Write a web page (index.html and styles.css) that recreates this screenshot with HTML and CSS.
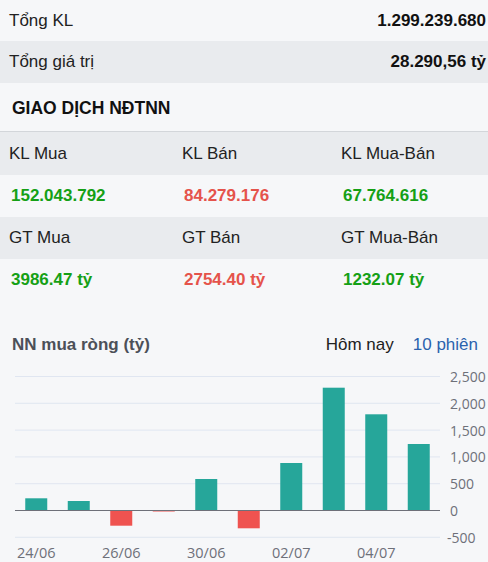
FILE: index.html
```html
<!DOCTYPE html>
<html lang="vi">
<head>
<meta charset="utf-8">
<title>Giao dịch NĐTNN</title>
<link rel="stylesheet" href="styles.css">
</head>
<body>
<div class="panel">
  <div class="sum-row">
    <span class="sum-label">Tổng KL</span>
    <span class="sum-value">1.299.239.680</span>
  </div>
  <div class="sum-row alt">
    <span class="sum-label">Tổng giá trị</span>
    <span class="sum-value">28.290,56 tỷ</span>
  </div>
  <div class="section-title">GIAO DỊCH NĐTNN</div>
  <div class="grid">
    <div class="cell head">KL Mua</div>
    <div class="cell head">KL Bán</div>
    <div class="cell head">KL Mua-Bán</div>
    <div class="cell val up">152.043.792</div>
    <div class="cell val down">84.279.176</div>
    <div class="cell val up">67.764.616</div>
    <div class="cell head">GT Mua</div>
    <div class="cell head">GT Bán</div>
    <div class="cell head">GT Mua-Bán</div>
    <div class="cell val up">3986.47 tỷ</div>
    <div class="cell val down">2754.40 tỷ</div>
    <div class="cell val up">1232.07 tỷ</div>
  </div>
  <div class="chart-head">
    <span class="chart-title">NN mua ròng (tỷ)</span>
    <div class="tabs">
      <span class="tab">Hôm nay</span>
      <span class="tab active">10 phiên</span>
    </div>
  </div>
  <svg class="chart" width="488" height="195" viewBox="0 0 488 195">
    <g class="grid-lines">
      <line x1="15" x2="440" y1="10.5" y2="10.5"/>
      <line x1="15" x2="440" y1="37.3" y2="37.3"/>
      <line x1="15" x2="440" y1="64.1" y2="64.1"/>
      <line x1="15" x2="440" y1="90.9" y2="90.9"/>
      <line x1="15" x2="440" y1="117.7" y2="117.7"/>
      <line x1="15" x2="440" y1="171.3" y2="171.3"/>
    </g>
    <g class="bars">
      <rect class="pos" x="25.25" y="132.3" width="22" height="12.2"/>
      <rect class="pos" x="67.75" y="135" width="22" height="9.5"/>
      <rect class="neg" x="110.25" y="144.5" width="22" height="15.2"/>
      <rect class="neg" x="152.75" y="144.5" width="22" height="1"/>
      <rect class="pos" x="195.25" y="113" width="22" height="31.5"/>
      <rect class="neg" x="237.75" y="144.5" width="22" height="17.8"/>
      <rect class="pos" x="280.25" y="97" width="22" height="47.5"/>
      <rect class="pos" x="322.75" y="21.7" width="22" height="122.8"/>
      <rect class="pos" x="365.25" y="48.3" width="22" height="96.2"/>
      <rect class="pos" x="407.75" y="78" width="22" height="66.5"/>
    </g>
    <line class="zero" x1="15" x2="440" y1="144.5" y2="144.5"/>
    <g class="y-labels">
      <text x="450" y="10.5">2,500</text>
      <text x="450" y="37.3">2,000</text>
      <text x="450" y="64.1">1,500</text>
      <text x="450" y="90.9">1,000</text>
      <text x="450" y="117.7">500</text>
      <text x="450" y="144.5">0</text>
      <text x="447" y="171.3">-500</text>
    </g>
    <g class="x-labels">
      <text x="36.25" y="192">24/06</text>
      <text x="121.25" y="192">26/06</text>
      <text x="206.25" y="192">30/06</text>
      <text x="291.25" y="192">02/07</text>
      <text x="376.25" y="192">04/07</text>
    </g>
  </svg>
</div>
</body>
</html>
```
FILE: styles.css
```css
html, body {
  margin: 0;
  padding: 0;
  background: #f6f7f9;
}
body {
  font-family: "Liberation Sans", Arial, sans-serif;
  font-size: 17px;
  color: #222;
  width: 488px;
  height: 562px;
  overflow: hidden;
}
.panel {
  display: flex;
  flex-direction: column;
}
.sum-row {
  height: 41px;
  display: flex;
  align-items: center;
  justify-content: space-between;
  padding: 0 2px 0 9px;
  background: #f6f7f9;
}
.sum-row.alt {
  height: 42px;
  background: #e9ebee;
}
.sum-value {
  font-weight: bold;
  color: #111;
}
.section-title {
  height: 49px;
  box-sizing: border-box;
  padding: 3px 0 0 12px;
  display: flex;
  align-items: center;
  font-weight: bold;
  font-size: 17.5px;
  color: #111;
  border-bottom: 1px solid #d3d6da;
}
.grid {
  display: grid;
  grid-template-columns: 173px 159px 1fr;
  grid-template-rows: 43px 42px 42px 42px;
}
.cell {
  display: flex;
  align-items: center;
  padding-left: 9px;
}
.cell.head {
  background: #e9ebee;
  color: #222;
}
.cell.val {
  background: #f6f7f9;
  font-weight: bold;
  padding-left: 11px;
}
.up { color: #15a015; }
.down { color: #e5534b; }
.chart-head {
  margin-top: 23px;
  height: 42px;
  display: flex;
  align-items: center;
  justify-content: space-between;
  padding: 0 10px 0 12px;
}
.chart-title {
  font-weight: bold;
  color: #4c5058;
}
.tabs {
  display: flex;
  gap: 19px;
}
.tab { color: #222; }
.tab.active { color: #2a62ad; }
.chart {
  display: block;
}
.grid-lines line {
  stroke: #e0e6f1;
  stroke-width: 1;
}
.zero {
  stroke: #6e7079;
  stroke-width: 1;
}
.bars .pos { fill: #26a69a; }
.bars .neg { fill: #ef5350; }
.y-labels text {
  font-family: "Open Sans", "Noto Sans", sans-serif;
  font-size: 14px;
  fill: #6e7079;
  dominant-baseline: central;
}
.x-labels text {
  font-family: "Open Sans", "Noto Sans", sans-serif;
  font-size: 14.5px;
  fill: #6e7079;
  text-anchor: middle;
}
```
